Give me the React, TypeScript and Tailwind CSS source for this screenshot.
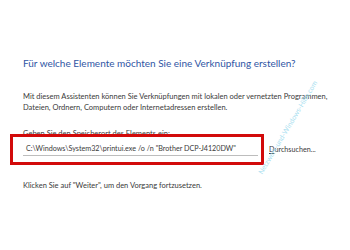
export default function App() {
  return (
    <div className="relative h-[250px] w-[350px] overflow-hidden bg-white font-['Lato',sans-serif]">
      <div className="flex flex-col pl-[23px] pt-[56px]">
        <h1 className="whitespace-nowrap text-[10px] leading-[15px] text-[#2f55a4]">
          Für welche Elemente möchten Sie eine Verknüpfung erstellen?
        </h1>
        <p className="mt-[20px] whitespace-nowrap text-[7.5px] leading-[11px] text-[#3a3a3a]">
          Mit diesem Assistenten können Sie Verknüpfungen mit lokalen oder vernetzten Programmen,
          <br />
          Dateien, Ordnern, Computern oder Internetadressen erstellen.
        </p>
        <div className="mt-[15px] whitespace-nowrap text-[7.5px] leading-[11px] text-[#3a3a3a]">
          Geben Sie den Speicherort des Elements ein:
        </div>
        <div className="mt-[-5px] flex items-center gap-[5px]">
          <div className="ml-[-13px] h-[31px] w-[254px] shrink-0 border-[3px] border-[#d20a0a] pl-[10px] pr-[3px] pt-[6px]">
            <div className="whitespace-nowrap border-b border-[#bdbdbd] pl-[3px] pb-[1px] text-[7.2px] leading-[11px] text-[#3a3a3a]">
              C:\Windows\System32\printui.exe /o /n "Brother DCP-J4120DW"
            </div>
          </div>
          <div className="whitespace-nowrap text-[7.2px] leading-[11px] text-[#3a3a3a]">
            <span className="underline">D</span>urchsuchen...
          </div>
        </div>
        <div className="mt-[15px] whitespace-nowrap text-[7.5px] leading-[11px] text-[#3a3a3a]">
          Klicken Sie auf "Weiter", um den Vorgang fortzusetzen.
        </div>
      </div>
      <div className="pointer-events-none absolute left-[205px] top-[122px] w-[165px] origin-center -rotate-[59deg] text-center text-[7px] text-[#a8e0f0]">
        Netzwerk-und-Windows-Hilfe.com
      </div>
    </div>
  );
}
